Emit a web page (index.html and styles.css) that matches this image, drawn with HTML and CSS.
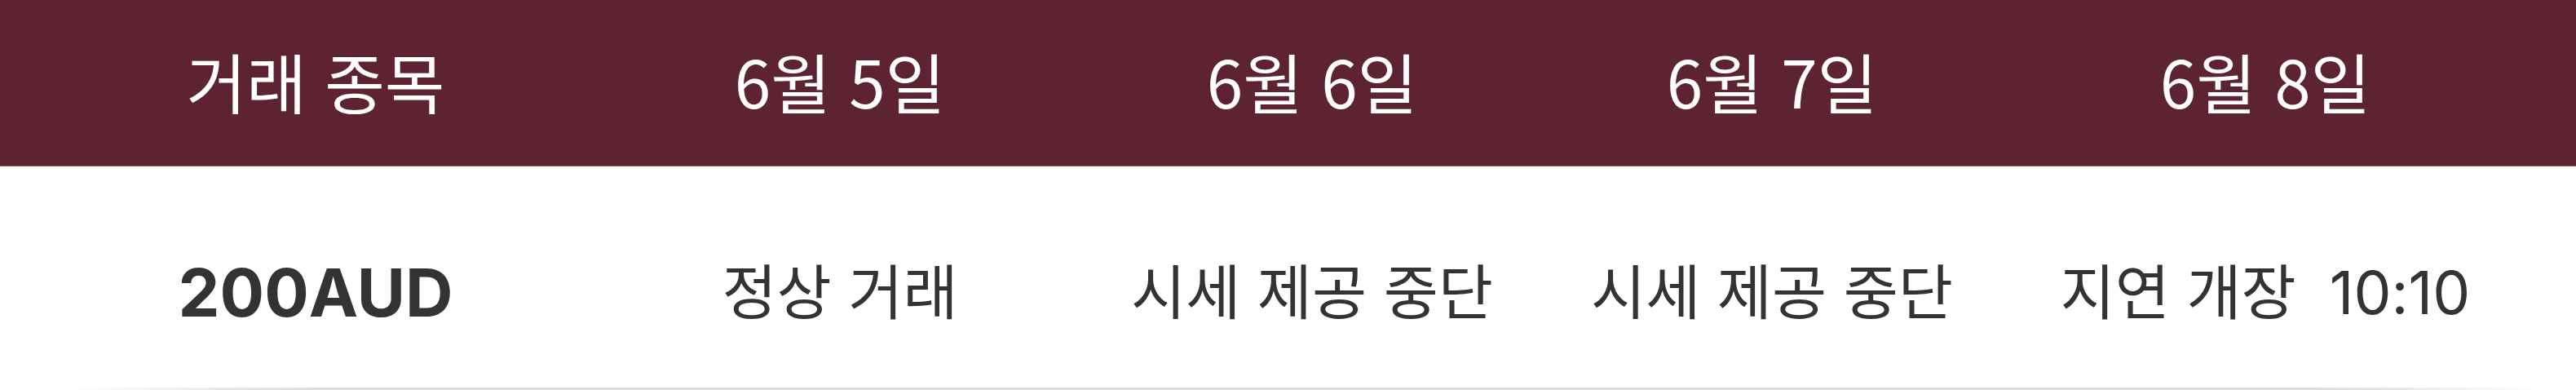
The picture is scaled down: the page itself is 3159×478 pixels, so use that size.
FILE: index.html
```html
<!DOCTYPE html>
<html lang="ko">
<head>
<meta charset="utf-8">
<title>거래 종목</title>
<link rel="stylesheet" href="styles.css">
</head>
<body>
<div class="schedule">
  <div class="row head">
    <div class="cell">거래 종목</div>
    <div class="cell">6월 5일</div>
    <div class="cell">6월 6일</div>
    <div class="cell">6월 7일</div>
    <div class="cell">6월 8일</div>
  </div>
  <div class="row body">
    <div class="cell symbol">200AUD</div>
    <div class="cell">정상 거래</div>
    <div class="cell">시세 제공 중단</div>
    <div class="cell">시세 제공 중단</div>
    <div class="cell">지연 개장&nbsp; 10:10</div>
  </div>
  <div class="rule"></div>
</div>
</body>
</html>
```

FILE: styles.css
```css
html, body {
  margin: 0;
  padding: 0;
  background: #ffffff;
}

.schedule {
  width: 100%;
  font-family: "Inter", "Noto Sans CJK KR", sans-serif;
}

.row {
  display: grid;
  grid-template-columns: 692fr 594fr 564fr 564fr 646fr;
  padding: 0 58px 0 41px;
}

.cell {
  text-align: center;
  white-space: nowrap;
}

.head {
  background: #5d2333;
  color: #ffffff;
  height: 203px;
  align-items: center;
  border-bottom: 1px solid #8d5f6a;
  font-size: 80px;
  line-height: 1.2;
  font-family: "Noto Sans CJK KR", sans-serif;
}

.head .cell {
  padding-bottom: 8px;
}

.body {
  color: #333333;
  font-size: 73px;
  line-height: 90px;
  padding-top: 110px;
  padding-bottom: 71px;
}

.body .cell {
  font-family: "Inter", "Noto Sans CJK KR", sans-serif;
}

.symbol {
  font-weight: 700;
  font-size: 81px;
}

.rule {
  height: 3px;
  background: linear-gradient(to right, rgba(220,220,220,0) 2.5%, #dedede 12%, #dedede 90%, rgba(220,220,220,0) 99%);
}
```
